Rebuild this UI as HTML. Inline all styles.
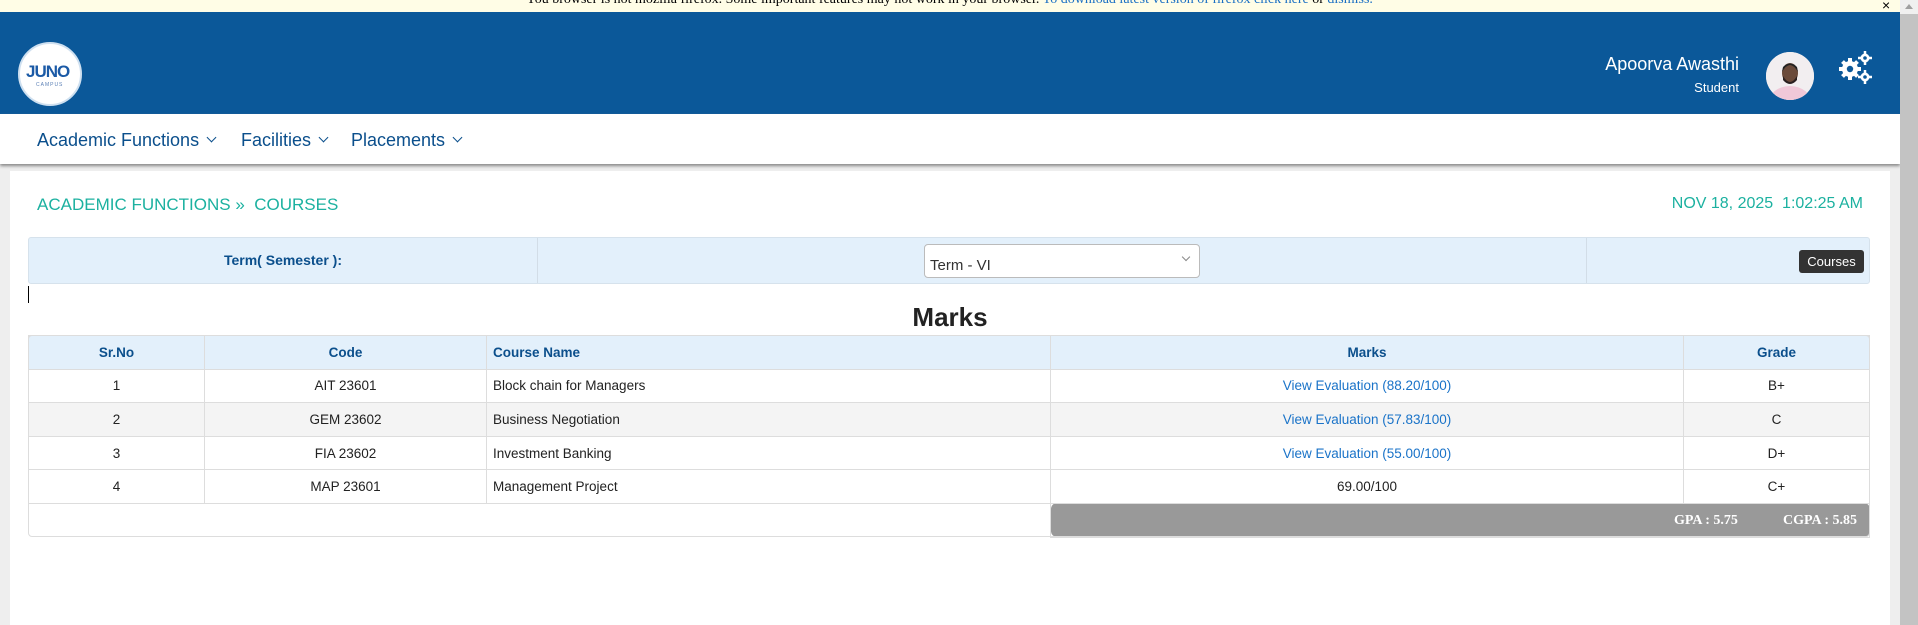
<!DOCTYPE html>
<html><head><meta charset="utf-8">
<style>
*{box-sizing:border-box;margin:0;padding:0}
html,body{width:1918px;height:625px;overflow:hidden;background:#eee;font-family:"Liberation Sans","DejaVu Sans",sans-serif}
.notice{position:absolute;left:0;top:0;width:1900px;height:12px;background:#fffde6;overflow:hidden}
.notice span{position:absolute;left:526px;top:-8px;font:14px "Liberation Serif",serif;color:#000;white-space:nowrap}
.notice a{color:#1a6fc4}
.close{position:absolute;left:1882px;top:-3px;font-size:14px;color:#000}
.sb{position:absolute;left:1900px;top:0;width:18px;height:625px;background:#c3c3c3}
.sb i{position:absolute;top:0;left:0;width:18px;height:14px;background:#f0f0f0}
.sb i:after{content:"";position:absolute;left:5px;top:4px;border-left:4px solid transparent;border-right:4px solid transparent;border-bottom:5px solid #a0a0a0}
.hdr{position:absolute;left:0;top:12px;width:1900px;height:102px;background:#0b5899}
.logo{position:absolute;left:18px;top:30px;width:64px;height:64px;border-radius:50%;background:#fff;border:2px solid #cfe0f0}
.logo b{position:absolute;left:6px;top:18px;font:bold 17px "Liberation Sans",sans-serif;color:#1b5aa6;letter-spacing:-1px}
.logo s{position:absolute;left:16px;top:38px;font-size:5px;color:#5a7fb5;letter-spacing:1px;text-decoration:none}
.name{position:absolute;right:179px;top:42px;color:#fff;font-size:18px}
.role{position:absolute;right:179px;top:68px;color:#fff;font-size:13px}
.av{position:absolute;left:1766px;top:40px;width:48px;height:48px;border-radius:50%;background:#f3e6ea;overflow:hidden}
.nav{position:absolute;left:0;top:114px;width:1900px;height:50px;background:#fff;box-shadow:0 2px 3px #888}
.nav span{position:absolute;top:16px;font-size:18px;color:#0b4f8c}
.nav span:after{content:"";display:inline-block;width:6px;height:6px;border-right:1.5px solid #0b4f8c;border-bottom:1.5px solid #0b4f8c;transform:rotate(45deg);margin-left:9px;vertical-align:5px}
.card{position:absolute;left:10px;top:171px;width:1880px;height:454px;background:#fff}
.bc{position:absolute;left:37px;top:195px;font-size:17px;color:#1cb1a0}
.dt{position:absolute;right:55px;top:195px;font-size:16px;color:#1cb1a0}
.term{position:absolute;left:28px;top:237px;width:1842px;height:47px;background:#e3f0fb;border:1px solid #d6e2ec;border-radius:3px}
.term .d{position:absolute;top:0;width:1px;height:45px;background:#d2dde7}
.tl{position:absolute;left:0;width:508px;top:14px;text-align:center;font-weight:bold;font-size:14px;color:#0b4f8c}
.sel{position:absolute;left:895px;top:6px;width:276px;height:34px;background:#fff;border:1px solid #bbb;border-radius:4px}
.sel span{position:absolute;left:5px;top:12px;font-size:15px;color:#333}
.sel i{position:absolute;right:10px;top:9px;width:6px;height:6px;border-right:1px solid #888;border-bottom:1px solid #888;transform:rotate(45deg)}
.btn{position:absolute;left:1770px;top:12px;width:65px;height:23px;background:#333;border-radius:3px;color:#fff;font-size:13px;text-align:center;line-height:23px}
.cur{position:absolute;left:28px;top:286px;width:1px;height:17px;background:#000}
.mk{position:absolute;left:0;width:1900px;top:302px;text-align:center;font-weight:bold;font-size:26px;color:#222}
table{position:absolute;left:28px;top:335px;width:1842px;border-collapse:collapse;font-size:13.5px}
td,th{height:33.6px;border:1px solid #ddd;text-align:center;color:#222;font-weight:normal}
th{background:#e3f0fb;color:#0b4f8c;font-weight:bold}
.l{text-align:left;padding-left:6px}
tr.g td{background:#f4f4f4}
a{color:#1a73c8;text-decoration:none}
.gp{background:#999;border-radius:6px;color:#fff;font:bold 14px "Liberation Serif",serif;text-align:right;padding-right:6px;position:relative}
.gp span{position:absolute;top:9px}
.outer{position:absolute;left:28px;top:335px;width:1842px;height:202px;border:1px solid #ddd;border-radius:4px}
</style></head><body>
<div class="notice"><span>You browser is not mozilla firefox. Some important features may not work in your browser. <a>To download latest version of firefox click here</a> or <a>dismiss.</a></span><div class="close">×</div></div>
<div class="hdr">
<div class="logo"><b>JUNO</b><s>CAMPUS</s></div>
<div class="name" style="right:161px">Apoorva Awasthi</div>
<div class="role" style="right:161px">Student</div>
<div class="av"><svg width="48" height="48"><rect x="0" y="0" width="48" height="48" fill="#f2eef0"/><ellipse cx="24" cy="52" rx="22" ry="18" fill="#f0c8d8"/><ellipse cx="24" cy="21" rx="8" ry="10" fill="#6b4a3a"/><path d="M16 20 Q24 6 32 20 L31 15 Q24 8 17 15Z" fill="#222"/><path d="M17 24 Q24 36 31 24 L31 28 Q24 36 17 28Z" fill="#2a2020"/></svg></div>
<svg style="position:absolute;left:1838px;top:38px" width="34" height="34" viewBox="0 0 34 34" fill="#fff">
<circle cx="12" cy="19" r="8"/><g stroke="#fff" stroke-width="4"><line x1="12" y1="8" x2="12" y2="30"/><line x1="1" y1="19" x2="23" y2="19"/><line x1="4.5" y1="11.5" x2="19.5" y2="26.5"/><line x1="19.5" y1="11.5" x2="4.5" y2="26.5"/></g><circle cx="12" cy="19" r="3.2" fill="#0b5899"/>
<circle cx="27" cy="8" r="4.5"/><circle cx="27" cy="27" r="4.5"/><g stroke="#fff" stroke-width="2.5"><line x1="27" y1="1" x2="27" y2="15"/><line x1="20" y1="8" x2="34" y2="8"/><line x1="27" y1="20" x2="27" y2="34"/><line x1="20" y1="27" x2="34" y2="27"/></g><circle cx="27" cy="8" r="1.8" fill="#0b5899"/><circle cx="27" cy="27" r="1.8" fill="#0b5899"/></svg>
</div>
<div class="nav"><span style="left:37px">Academic Functions</span><span style="left:241px">Facilities</span><span style="left:351px">Placements</span></div>
<div class="card"></div>
<div class="bc">ACADEMIC FUNCTIONS » &nbsp;COURSES</div>
<div class="dt">NOV 18, 2025 &nbsp;1:02:25 AM</div>
<div class="term"><div class="tl">Term( Semester ):</div><div class="d" style="left:508px"></div><div class="d" style="left:1557px"></div>
<div class="sel"><span>Term - VI</span><i></i></div><div class="btn">Courses</div></div>
<div class="cur"></div>
<div class="mk">Marks</div>
<table>
<tr><th style="width:176px">Sr.No</th><th style="width:282px">Code</th><th class="l" style="width:564px">Course Name</th><th style="width:633px">Marks</th><th>Grade</th></tr>
<tr><td>1</td><td>AIT 23601</td><td class="l">Block chain for Managers</td><td><a>View Evaluation (88.20/100)</a></td><td>B+</td></tr>
<tr class="g"><td>2</td><td>GEM 23602</td><td class="l">Business Negotiation</td><td><a>View Evaluation (57.83/100)</a></td><td>C</td></tr>
<tr><td>3</td><td>FIA 23602</td><td class="l">Investment Banking</td><td><a>View Evaluation (55.00/100)</a></td><td>D+</td></tr>
<tr><td>4</td><td>MAP 23601</td><td class="l">Management Project</td><td>69.00/100</td><td>C+</td></tr>
<tr><td colspan="3" style="border:none"></td><td colspan="2" class="gp"><span style="left:623px">GPA : 5.75</span><span style="left:732px">CGPA : 5.85</span></td></tr>
</table>
<div class="outer"></div>
<div class="sb"><i></i></div>
</body></html>
